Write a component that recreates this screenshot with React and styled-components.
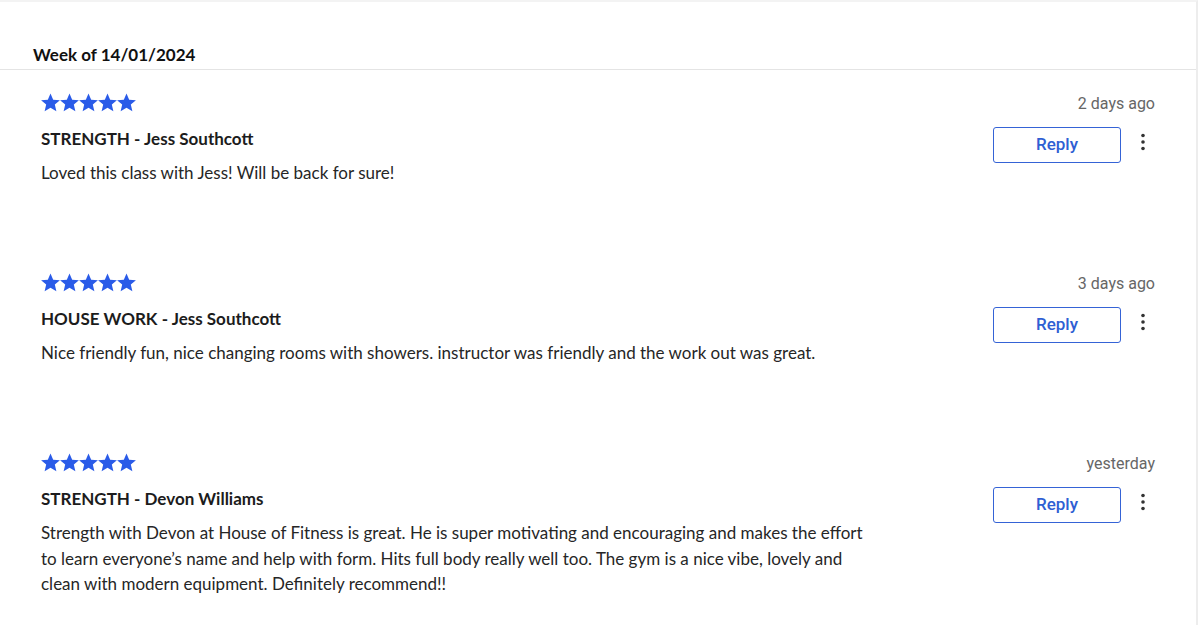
import React from 'react'
import styled, { createGlobalStyle } from 'styled-components'

const GlobalStyle = createGlobalStyle`
  body {
    margin: 0;
    background: #fff;
    font-family: Lato, "Noto Sans", sans-serif;
    color: #222;
  }
`

const Page = styled.div`
  width: 1198px;
  height: 625px;
  border-top: 2px solid #f3f3f3;
  border-right: 2px solid #ededed;
  box-sizing: border-box;
  overflow: hidden;
`

const WeekHeader = styled.h3`
  margin: 0;
  padding: 42px 0 3px 33px;
  font-size: 17px;
  line-height: 22px;
  font-weight: 700;
  color: #111;
  border-bottom: 1px solid #e4e4e4;
`

const Review = styled.div`
  display: flex;
  justify-content: space-between;
  min-height: 180px;
  box-sizing: border-box;
  padding: 23px 41px 0 41px;
`

const Main = styled.div`
  display: flex;
  flex-direction: column;
  max-width: 835px;
`

const Stars = styled.div`
  display: flex;
  height: 19px;
  color: #2a5be8;
`

const ClassName = styled.div`
  margin-top: 16px;
  font-size: 17px;
  line-height: 22px;
  font-weight: 700;
  color: #1c1c1c;
`

const Body = styled.p`
  margin: 10px 0 0;
  font-size: 17px;
  line-height: 25.7px;
  color: #262626;
`

const Side = styled.div`
  display: flex;
  flex-direction: column;
  align-items: flex-end;
`

const When = styled.div`
  font-family: Roboto, sans-serif;
  font-size: 16px;
  line-height: 20px;
  margin-top: 1px;
  color: #666;
`

const Actions = styled.div`
  display: flex;
  align-items: center;
  margin-top: 13px;
`

const ReplyButton = styled.button`
  width: 128px;
  height: 36px;
  box-sizing: border-box;
  border: 1px solid #3563d6;
  border-radius: 3px;
  background: #fff;
  color: #2f5fd3;
  font-family: Roboto, sans-serif;
  font-size: 17px;
  font-weight: 500;
  padding: 0 0 2px;
  cursor: pointer;
`

const MoreButton = styled.button`
  width: 24px;
  height: 24px;
  margin-left: 10px;
  margin-top: -6px;
  padding: 0;
  border: 0;
  background: none;
  display: flex;
  align-items: center;
  justify-content: center;
  color: #333;
`

const Star = () => (
  <svg width="19" height="19" viewBox="1 1 22 22">
    <path fill="currentColor" d="M12 1.5l3.1 7.2 7.8.6-5.9 5.1 1.8 7.6L12 18l-6.8 4 1.8-7.6-5.9-5.1 7.8-.6z" />
  </svg>
)

const Kebab = () => (
  <svg width="6" height="18" viewBox="0 0 6 18">
    <circle cx="3" cy="2.5" r="1.8" fill="currentColor" />
    <circle cx="3" cy="9" r="1.8" fill="currentColor" />
    <circle cx="3" cy="15.5" r="1.8" fill="currentColor" />
  </svg>
)

const reviews = [
  {
    title: 'STRENGTH - Jess Southcott',
    text: 'Loved this class with Jess! Will be back for sure!',
    when: '2 days ago',
  },
  {
    title: 'HOUSE WORK - Jess Southcott',
    text: 'Nice friendly fun, nice changing rooms with showers. instructor was friendly and the work out was great.',
    when: '3 days ago',
  },
  {
    title: 'STRENGTH - Devon Williams',
    text: 'Strength with Devon at House of Fitness is great. He is super motivating and encouraging and makes the effort to learn everyone\u2019s name and help with form. Hits full body really well too. The gym is a nice vibe, lovely and clean with modern equipment. Definitely recommend!!',
    when: 'yesterday',
  },
]

export default function App() {
  return (
    <Page>
      <GlobalStyle />
      <WeekHeader>Week of 14/01/2024</WeekHeader>
      {reviews.map((r, i) => (
        <Review key={i}>
          <Main>
            <Stars>
              {[0, 1, 2, 3, 4].map(n => <Star key={n} />)}
            </Stars>
            <ClassName>{r.title}</ClassName>
            <Body>{r.text}</Body>
          </Main>
          <Side>
            <When>{r.when}</When>
            <Actions>
              <ReplyButton>Reply</ReplyButton>
              <MoreButton aria-label="More options"><Kebab /></MoreButton>
            </Actions>
          </Side>
        </Review>
      ))}
    </Page>
  )
}
